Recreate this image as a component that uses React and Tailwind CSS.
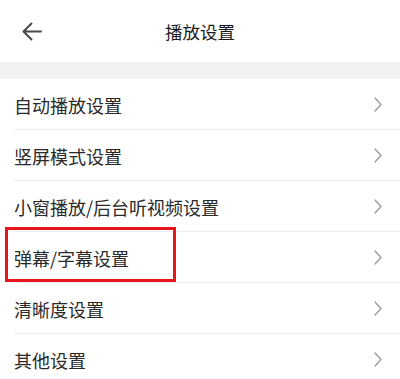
import React from "react";

const items = [
  "自动播放设置",
  "竖屏模式设置",
  "小窗播放/后台听视频设置",
  "弹幕/字幕设置",
  "清晰度设置",
  "其他设置",
];

function Chevron() {
  return (
    <svg width="8" height="15" viewBox="0 0 8 15" fill="none" className="shrink-0">
      <path d="M1 1 L7 7.5 L1 14" stroke="#9a9a9a" strokeWidth="1.3" strokeLinecap="round" strokeLinejoin="round" />
    </svg>
  );
}

export default function App() {
  return (
    <div
      className="w-[400px] h-[379px] overflow-hidden bg-white text-[#2a2a2a]"
      style={{ fontFamily: '"Noto Sans CJK SC", "Noto Sans", sans-serif' }}
    >
      <div className="relative h-[62px] flex items-center justify-center">
        <svg
          className="absolute left-[22px] top-[22px]"
          width="20"
          height="19"
          viewBox="0 0 20 19"
          fill="none"
        >
          <path d="M19 9.5 H2 M9.5 1.5 L1.5 9.5 L9.5 17.5" stroke="#4a4a4a" strokeWidth="2" strokeLinecap="round" strokeLinejoin="round" />
        </svg>
        <span className="text-[17.5px] leading-none text-[#1a1a1a] pt-[2px]">播放设置</span>
      </div>
      <div className="h-[17px] bg-[#f1f2f4]" />
      <div className="flex flex-col">
        {items.map((t, i) => (
          <div key={t} className="relative pl-[14px]">
            <div className="h-[51px] flex items-center justify-between pr-[18px] border-b border-[#ececec]">
              <span className="text-[18px] leading-none pt-[2px]">{t}</span>
              <Chevron />
            </div>
            {i === 3 && (
              <div className="absolute left-[5px] top-[-5px] w-[171px] h-[55px] border-[3px] border-[#e8141c]" />
            )}
          </div>
        ))}
      </div>
    </div>
  );
}
